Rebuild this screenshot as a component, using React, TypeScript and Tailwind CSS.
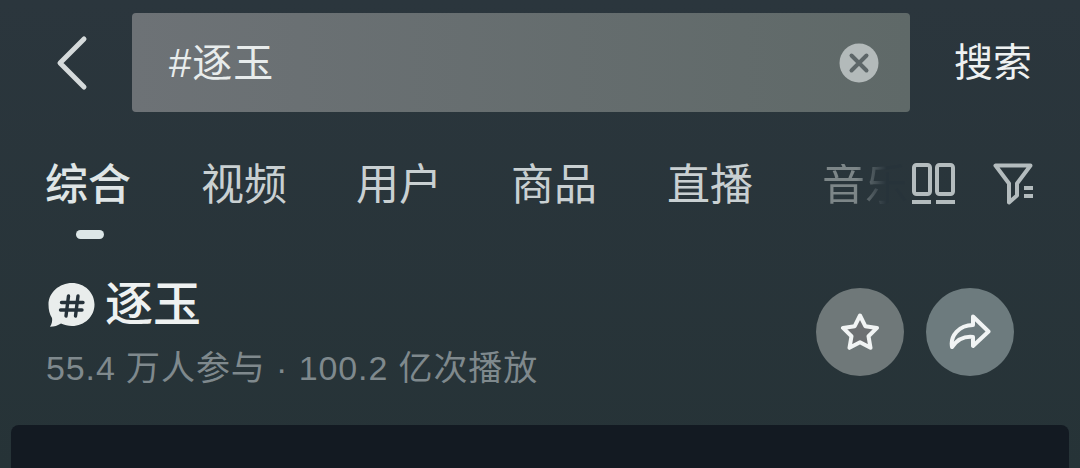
const tabs = [
  { label: "综合", className: "w-[86px] text-[#dfe5e6] font-medium" },
  { label: "视频", className: "w-[86px] ml-[70px] text-[#c9d0d2]" },
  { label: "用户", className: "w-[86px] ml-[69px] text-[#c9d0d2]" },
  { label: "商品", className: "w-[86px] ml-[69px] text-[#c9d0d2]" },
  { label: "直播", className: "w-[86px] ml-[70px] text-[#c9d0d2]" },
];

function BackIcon() {
  return (
    <svg width="34" height="56" viewBox="0 0 34 56" fill="none">
      <path d="M29 4 5 28l24 24" stroke="#d5dadb" strokeWidth="5" strokeLinecap="round" strokeLinejoin="round" />
    </svg>
  );
}

function ClearIcon() {
  return (
    <svg width="40" height="40" viewBox="0 0 40 40">
      <circle cx="20" cy="20" r="19.5" fill="#b3baba" />
      <path d="M12.5 12.5l15 15M27.5 12.5l-15 15" stroke="#5d6668" strokeWidth="4" strokeLinecap="round" />
    </svg>
  );
}

function LayoutIcon() {
  return (
    <svg width="44" height="42" viewBox="0 0 44 42" fill="none" stroke="#b4bcbe">
      <rect x="2" y="2" width="16" height="29" rx="2.5" strokeWidth="4" />
      <rect x="25" y="2" width="16" height="29" rx="2.5" strokeWidth="4" />
      <path d="M0 39h19M24 39h19" strokeWidth="4" />
    </svg>
  );
}

function FilterIcon() {
  return (
    <svg width="42" height="42" viewBox="0 0 42 42" fill="none" stroke="#b4bcbe">
      <path d="M2.5 2.5h35L24 20.5v12l-8 7V20.5Z" strokeWidth="4" strokeLinejoin="round" />
      <path d="M31 25h9M31 33h9" strokeWidth="4" />
    </svg>
  );
}

function TopicIcon() {
  return (
    <svg width="47" height="44" viewBox="0 0 47 44">
      <path
        d="M24 0C36.500 0 46.500 9.500 46.500 21.500S36.500 43 24 43C20 43 16.500 42 13 40.500 10 42.500 6 43.800 2 43.800 4 41 4.500 37.500 4 35 1.500 31 0.500 26.500 0.500 21.500 0.500 9.500 11.500 0 24 0Z"
        fill="#e9edec"
      />
      <path
        d="M20.500 13 18 33M30 13 27.500 33M13.500 19.500H35M12.500 27H34"
        stroke="#26323a"
        strokeWidth="3.400"
        strokeLinecap="round"
        fill="none"
      />
    </svg>
  );
}

function StarIcon() {
  return (
    <svg width="40" height="38" viewBox="0 0 40 38">
      <path
        d="M20 2.500 25.300 13.200 37 14.900 28.500 23.200 30.500 34.800 20 29.300 9.500 34.800 11.500 23.200 3 14.900 14.700 13.200Z"
        fill="#6d7072"
        stroke="#f1f4f4"
        strokeWidth="4"
        strokeLinejoin="round"
      />
    </svg>
  );
}

function ShareIcon() {
  return (
    <svg width="42" height="36" viewBox="0 0 42 36" fill="none">
      <path
        d="M24 2.500 39.500 17.500 24 32V23C15 22 8 26 3 33 1 22 10 11 24 11Z"
        stroke="#f1f4f4"
        strokeWidth="4"
        strokeLinejoin="round"
        strokeLinecap="round"
      />
    </svg>
  );
}

export default function App() {
  return (
    <div
      className="w-[1080px] h-[468px] overflow-hidden flex flex-col bg-gradient-to-b from-[#2b363d] to-[#263337]"
      style={{ fontFamily: '"Liberation Sans", "Noto Sans CJK SC", sans-serif' }}
    >
      {/* search row */}
      <div className="flex items-center h-[99px] mt-[13px] shrink-0">
        <div className="w-[132px] pl-[55px] flex">
          <BackIcon />
        </div>
        <div className="w-[778px] h-[99px] rounded-[4px] bg-gradient-to-r from-[#6d7276] to-[#5f6968] flex items-center pl-[37px] pr-[31px]">
          <span className="text-[40px] leading-none text-[#e8ecec] flex-1 tracking-[1px]">#逐玉</span>
          <ClearIcon />
        </div>
        <span className="ml-[44px] text-[39px] leading-none text-[#eef1f1]">搜索</span>
      </div>

      {/* tabs */}
      <div className="relative flex items-center h-[62px] mt-[42px] pl-[45px] shrink-0 text-[43px] leading-none">
        {tabs.map((tab) => (
          <span key={tab.label} className={`${tab.className} whitespace-nowrap`}>
            {tab.label}
          </span>
        ))}
        <span className="ml-[69px] w-[86px] whitespace-nowrap bg-gradient-to-r from-[#7d8688] from-40% to-[#27333a] to-75% bg-clip-text text-transparent">
          音乐
        </span>
        <div className="absolute left-[912px] top-[9px] flex items-start gap-[37px]">
          <LayoutIcon />
          <FilterIcon />
        </div>
      </div>
      <div className="w-[28px] h-[9px] ml-[76px] mt-[14px] rounded-full bg-[#dce6e7] shrink-0" />

      {/* topic */}
      <div className="flex items-start h-[137px] mt-[49px] pl-[46px] pr-[66px] shrink-0">
        <div className="flex-1 min-w-0 -mt-[5px]">
          <div className="flex items-center gap-[10px] h-[44px] pl-[2px]">
            <TopicIcon />
            <span className="text-[48px] leading-none text-[#eef1f1] font-medium">逐玉</span>
          </div>
          <p className="mt-[21px] text-[34px] leading-[40px] text-[#7f898d] whitespace-nowrap tracking-[0.9px]">
            55.4 万人参与 · 100.2 亿次播放
          </p>
        </div>
        <div className="flex gap-[22px]">
          <div className="w-[88px] h-[88px] rounded-full bg-[#6f7879] flex items-center justify-center">
            <StarIcon />
          </div>
          <div className="w-[88px] h-[88px] rounded-full bg-[#6d7b7e] flex items-center justify-center">
            <ShareIcon />
          </div>
        </div>
      </div>

      {/* result card */}
      <div className="h-[60px] mx-[11px] rounded-t-[8px] bg-[#131a22] shrink-0" />
    </div>
  );
}
